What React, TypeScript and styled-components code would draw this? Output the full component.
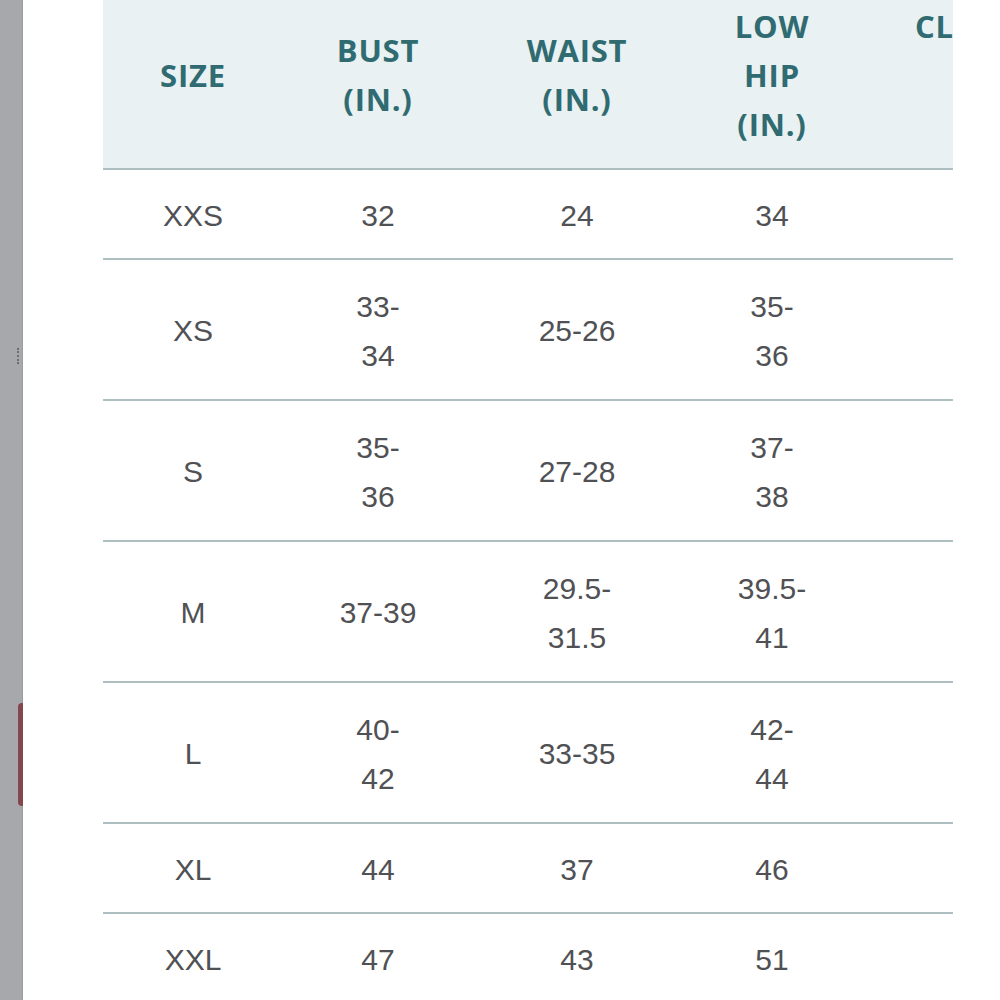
import React from 'react';
import styled, {createGlobalStyle} from 'styled-components';

const GlobalStyle = createGlobalStyle`
  html, body {
    margin: 0;
    padding: 0;
    background: #ffffff;
  }
`;

const Page = styled.div`
  display: flex;
  width: 1000px;
  height: 1000px;
  overflow: hidden;
  background: #fff;
`;

const SideStrip = styled.div`
  position: relative;
  flex: 0 0 22px;
  background: #a7a8ac;
  border-right: 1px solid #9c9da1;
`;

const SideTab = styled.div`
  position: absolute;
  right: -1px;
  top: 703px;
  width: 5px;
  height: 103px;
  background: #85474f;
  border-radius: 4px 0 0 4px;
`;

const SideMark = styled.div`
  position: absolute;
  right: 1px;
  top: 348px;
  width: 2px;
  height: 16px;
  border-left: 2px dotted #6c6d72;
`;

const TableWrap = styled.div`
  margin-left: 80px;
  width: 850px;
  flex: 0 0 850px;
  overflow: hidden;
`;

const Row = styled.div<{$head?: boolean; $lines?: number}>`
  display: grid;
  grid-template-columns: 180px 190px 208px 182px 200px;
  width: 960px;
  box-sizing: border-box;
  height: ${(p) => (p.$head ? 170 : p.$lines === 2 ? 141 : 90)}px;
  background: ${(p) => (p.$head ? '#e9f1f3' : '#fff')};
  border-bottom: 2px solid #afbec0;
`;

const HeadCell = styled.div<{$start?: boolean}>`
  display: flex;
  flex-direction: column;
  align-items: ${(p) => (p.$start ? 'flex-start' : 'center')};
  justify-content: ${(p) => (p.$start ? 'flex-start' : 'center')};
  padding: ${(p) => (p.$start ? '2px 0 18px 52px' : '0 0 18px')};
  font-family: 'Open Sans', 'Liberation Sans', sans-serif;
  font-weight: 700;
  font-size: 31px;
  letter-spacing: 0.8px;
  line-height: 49px;
  color: #2f6b70;
  text-align: center;
  white-space: nowrap;
`;

const Cell = styled.div`
  display: flex;
  flex-direction: column;
  align-items: center;
  justify-content: center;
  padding-top: 2px;
  font-family: 'Liberation Sans', Arial, sans-serif;
  font-size: 30px;
  line-height: 49px;
  color: #505154;
  white-space: nowrap;
`;

const headers: string[][] = [
  ['SIZE'],
  ['BUST', '(IN.)'],
  ['WAIST', '(IN.)'],
  ['LOW', 'HIP', '(IN.)'],
];

const rows: string[][][] = [
  [['XXS'], ['32'], ['24'], ['34']],
  [['XS'], ['33-', '34'], ['25-26'], ['35-', '36']],
  [['S'], ['35-', '36'], ['27-28'], ['37-', '38']],
  [['M'], ['37-39'], ['29.5-', '31.5'], ['39.5-', '41']],
  [['L'], ['40-', '42'], ['33-35'], ['42-', '44']],
  [['XL'], ['44'], ['37'], ['46']],
  [['XXL'], ['47'], ['43'], ['51']],
];

const Lines = ({lines}: {lines: string[]}) => (
  <>
    {lines.map((l, i) => (
      <span key={i}>{l}</span>
    ))}
  </>
);

const App = () => {
  return (
    <Page>
      <GlobalStyle />
      <SideStrip>
        <SideMark />
        <SideTab />
      </SideStrip>
      <TableWrap>
        <Row $head>
          {headers.map((h, i) => (
            <HeadCell key={i}>
              <Lines lines={h} />
            </HeadCell>
          ))}
          <HeadCell $start>CL</HeadCell>
        </Row>
        {rows.map((r, i) => {
          const lines = Math.max(...r.map((c) => c.length));
          return (
            <Row key={i} $lines={lines}>
              {r.map((c, j) => (
                <Cell key={j}>
                  <Lines lines={c} />
                </Cell>
              ))}
              <Cell />
            </Row>
          );
        })}
      </TableWrap>
    </Page>
  );
};

export default App;
